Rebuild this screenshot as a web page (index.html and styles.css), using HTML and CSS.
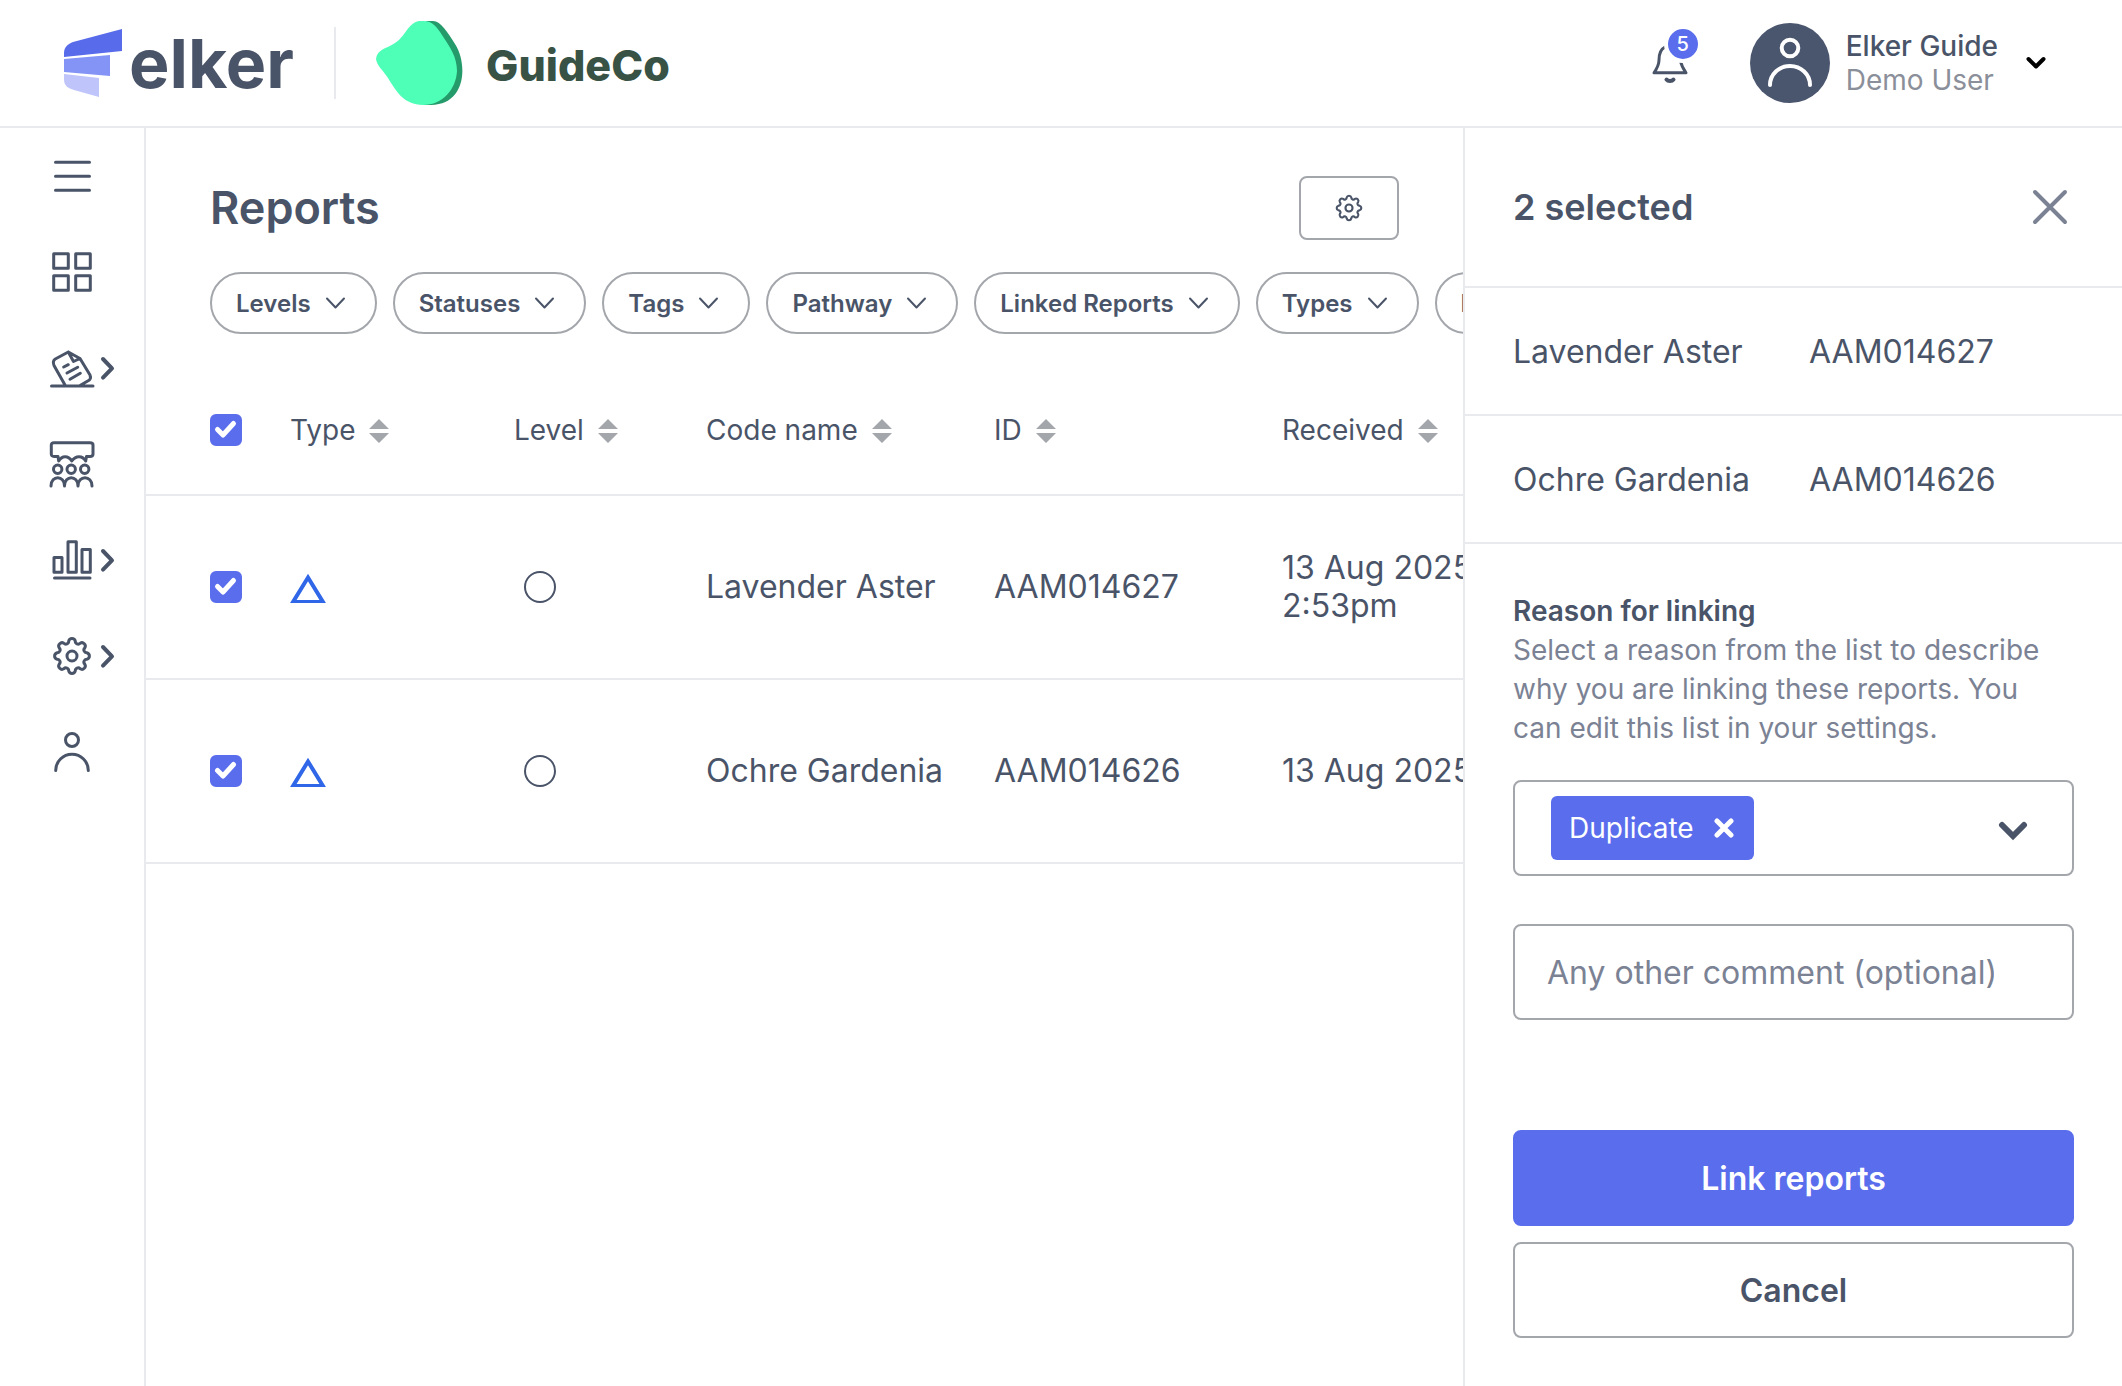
FILE: index.html
```
<!DOCTYPE html>
<html lang="en">
<head>
    <meta charset="UTF-8">
    <meta name="viewport" content="width=device-width, initial-scale=1.0">
    <title>Reports - Elker</title>
    <link rel="stylesheet" href="styles.css">
</head>
<body>
    <!-- Shared icons -->
    <svg class="sprite" aria-hidden="true">
        <symbol id="icon-gear" viewBox="0 0 48 48">
            <path d="M38.84 20.71A3.4 3.4 0 0 1 38.84 27.29A2.8 2.8 0 0 0 36.82 32.17A3.4 3.4 0 0 1 32.17 36.82A2.8 2.8 0 0 0 27.29 38.84A3.4 3.4 0 0 1 20.71 38.84A2.8 2.8 0 0 0 15.83 36.82A3.4 3.4 0 0 1 11.18 32.17A2.8 2.8 0 0 0 9.16 27.29A3.4 3.4 0 0 1 9.16 20.71A2.8 2.8 0 0 0 11.18 15.83A3.4 3.4 0 0 1 15.83 11.18A2.8 2.8 0 0 0 20.71 9.16A3.4 3.4 0 0 1 27.29 9.16A2.8 2.8 0 0 0 32.17 11.18A3.4 3.4 0 0 1 36.82 15.83A2.8 2.8 0 0 0 38.84 20.71Z"/>
            <circle cx="24" cy="24" r="5"/>
        </symbol>
        <symbol id="icon-right" viewBox="0 0 16 48">
            <path d="M3 15L12 24.3L3 33.6"/>
        </symbol>
        <symbol id="icon-down" viewBox="0 0 28 28">
            <path d="M4 9.5L12.5 18.5L21 9.5"/>
        </symbol>
        <symbol id="icon-user" viewBox="0 0 48 48">
            <circle cx="24" cy="12" r="6.5"/>
            <path d="M7.7 42.5A16.3 16.3 0 0 1 40.3 42.5"/>
        </symbol>
        <symbol id="icon-check" viewBox="0 0 32 32">
            <path d="M7.5 15.5L13 21L23.5 9.5"/>
        </symbol>
        <symbol id="icon-sort" viewBox="0 0 20 26">
            <path d="M10 1L20 11H0ZM0 15H20L10 25Z"/>
        </symbol>
    </svg>

    <header class="topbar">
        <a href="#" class="brand" aria-label="Elker home">
            <svg class="brand-mark" viewBox="0 0 58 68" width="58" height="68">
                <path fill="#586bea" d="M58 0V22L0 28V24C0 18 4 15 9 13Z"/>
                <path fill="#8494f6" d="M0 30L46 26V47L0 43Z"/>
                <path fill="#bfc5fa" d="M0 45L35 49V68L10 61C4 59 0 57 0 50Z"/>
            </svg>
            <span class="brand-name">elker</span>
        </a>
        <div class="client">
            <svg viewBox="0 0 88 84" width="88" height="84">
                <path fill="#259a6a" d="M50 0H57C65 0 72 12 79 23C92 43 90 84 55 84H48Z"/>
                <path fill="#4effb7" d="M43 0H48C56 0 61 6 66 14C74 26 81 36 81 50C80 68 67 84 47 84C28 84 20 70 12 57C7 49 1 45 0 38C1 28 10 28 19 22C29 16 32 2 43 0Z"/>
            </svg>
            <span class="client-name">GuideCo</span>
        </div>

        <div class="account">
            <button class="bell" aria-label="Notifications">
                <svg viewBox="0 0 48 48" width="48" height="48">
                    <path d="M19 8C14 10.5 13 15 13 21C13 26 11 29.5 8 33.8H40C37 29.500 35.500 27 34.500 22"/>
                    <path d="M20.500 40.500C22 42.500 26 42.500 27.500 40.500" stroke-width="4"/>
                </svg>
                <span class="badge">5</span>
            </button>
            <button class="profile">
                <span class="avatar">
                    <svg viewBox="0 0 80 80" width="80" height="80">
                        <circle cx="40" cy="25" r="8.3"/>
                        <path d="M20 62A20 19 0 0 1 60 62"/>
                    </svg>
                </span>
                <span class="profile-text">
                    <span class="profile-name">Elker Guide</span>
                    <span class="profile-role">Demo User</span>
                </span>
                <svg class="profile-arrow" viewBox="0 0 20 14" width="20" height="14">
                    <path d="M2.5 3L10 10.5L17.5 3"/>
                </svg>
            </button>
        </div>
    </header>

    <div class="layout">
        <nav class="sidebar" aria-label="Main">
            <button class="nav-item" aria-label="Toggle menu">
                <svg class="nav-icon" viewBox="0 0 48 48"><path d="M7.5 10.3H41.5M7.5 24.3H41.5M7.5 38.3H41.5"/></svg>
            </button>
            <a href="#" class="nav-item" aria-label="Dashboard">
                <svg class="nav-icon" viewBox="0 0 48 48"><path d="M5.7 5.7H20.3V20.3H5.7ZM27.7 5.7H42.3V20.3H27.7ZM5.7 27.7H20.3V42.3H5.7ZM27.7 27.7H42.3V42.3H27.7Z"/></svg>
            </a>
            <a href="#" class="nav-item" aria-label="Reports">
                <svg class="nav-icon" viewBox="0 0 48 48">
                    <path d="M3.5 42H45M17 41L6 21.5C5 19 5 16.5 7.3 15L20.3 8L32 14.5L42 31C43 33.5 42.5 35 41 36.3L32 41.5M20.3 8L25.5 17.5L32 14.5"/>
                    <path d="M15.7 23L20.3 20.7M19 29L29.7 23.3M22 35.3L32.3 29.3"/>
                </svg>
                <svg class="nav-arrow"><use href="#icon-right"/></svg>
            </a>
            <a href="#" class="nav-item" aria-label="Town hall">
                <svg class="nav-icon" viewBox="0 0 48 48">
                    <path d="M10 16.5H6C4 16.5 3.3 15.5 3.3 14V5C3.3 3.5 4 2.8 6 2.8H42C44 2.8 45 3.5 45 5V14C45 15.5 44 16.5 42 16.5H38.5L37.7 21C34.5 15.5 28 15 23.8 21C20 15 14 15.5 10.7 21Z"/>
                    <circle cx="9.7" cy="29.3" r="4.2"/><circle cx="23.2" cy="29.3" r="4.2"/><circle cx="36.7" cy="29.3" r="4.2"/>
                    <path d="M3 46C3 35 16.5 35 16.5 46C16.5 35 30 35 30 46C30 35 44 35 44 46"/>
                </svg>
            </a>
            <a href="#" class="nav-item" aria-label="Analytics">
                <svg class="nav-icon" viewBox="0 0 48 48"><path d="M6 21.5H14V36.3H6ZM20 5.7H28.3V36.3H20ZM34 13.5H42.3V36.3H34ZM6.5 42H42"/></svg>
                <svg class="nav-arrow"><use href="#icon-right"/></svg>
            </a>
            <a href="#" class="nav-item" aria-label="Settings">
                <svg class="nav-icon"><use href="#icon-gear"/></svg>
                <svg class="nav-arrow"><use href="#icon-right"/></svg>
            </a>
            <a href="#" class="nav-item" aria-label="Profile">
                <svg class="nav-icon"><use href="#icon-user"/></svg>
            </a>
        </nav>

        <main class="content">
            <div class="content-head">
                <h1>Reports</h1>
                <button class="btn-settings" aria-label="Table settings">
                    <svg><use href="#icon-gear"/></svg>
                </button>
            </div>

            <div class="filters">
                <button class="filter">Levels <svg><use href="#icon-down"/></svg></button>
                <button class="filter">Statuses <svg><use href="#icon-down"/></svg></button>
                <button class="filter">Tags <svg><use href="#icon-down"/></svg></button>
                <button class="filter">Pathway <svg><use href="#icon-down"/></svg></button>
                <button class="filter">Linked Reports <svg><use href="#icon-down"/></svg></button>
                <button class="filter">Types <svg><use href="#icon-down"/></svg></button>
                <button class="filter">Received <svg><use href="#icon-down"/></svg></button>
            </div>

            <table class="reports">
                <colgroup>
                    <col class="col-check">
                    <col class="col-type">
                    <col class="col-level">
                    <col class="col-name">
                    <col class="col-id">
                    <col class="col-date">
                </colgroup>
                <thead>
                    <tr>
                        <th><label class="check"><input type="checkbox" checked aria-label="Select all"><svg><use href="#icon-check"/></svg></label></th>
                        <th>Type <svg class="sort"><use href="#icon-sort"/></svg></th>
                        <th>Level <svg class="sort"><use href="#icon-sort"/></svg></th>
                        <th>Code name <svg class="sort"><use href="#icon-sort"/></svg></th>
                        <th>ID <svg class="sort"><use href="#icon-sort"/></svg></th>
                        <th>Received <svg class="sort"><use href="#icon-sort"/></svg></th>
                    </tr>
                </thead>
                <tbody>
                    <tr>
                        <td><label class="check"><input type="checkbox" checked aria-label="Select Lavender Aster"><svg><use href="#icon-check"/></svg></label></td>
                        <td><svg class="type" viewBox="0 0 36 32"><path d="M18 6.5L33 31H3Z"/></svg></td>
                        <td><span class="level"></span></td>
                        <td>Lavender Aster</td>
                        <td>AAM014627</td>
                        <td>13 Aug 2025<br>2:53pm</td>
                    </tr>
                    <tr>
                        <td><label class="check"><input type="checkbox" checked aria-label="Select Ochre Gardenia"><svg><use href="#icon-check"/></svg></label></td>
                        <td><svg class="type" viewBox="0 0 36 32"><path d="M18 6.5L33 31H3Z"/></svg></td>
                        <td><span class="level"></span></td>
                        <td>Ochre Gardenia</td>
                        <td>AAM014626</td>
                        <td>13 Aug 2025</td>
                    </tr>
                </tbody>
            </table>
        </main>

        <aside class="panel">
            <div class="panel-head">
                <h2>2 selected</h2>
                <button class="btn-close" aria-label="Close">
                    <svg viewBox="0 0 48 48"><path d="M9 9L39 39M39 9L9 39"/></svg>
                </button>
            </div>
            <table class="selected">
                <tr>
                    <td>Lavender Aster</td>
                    <td>AAM014627</td>
                </tr>
                <tr>
                    <td>Ochre Gardenia</td>
                    <td>AAM014626</td>
                </tr>
            </table>

            <form class="link-form">
                <label class="form-label" for="reason">Reason for linking</label>
                <p class="hint">Select a reason from the list to describe why you are linking these reports. You can edit this list in your settings.</p>
                <div class="multi">
                    <span class="tag">Duplicate
                        <button type="button" aria-label="Remove Duplicate">
                            <svg viewBox="0 0 20 20"><path d="M3 3L17 17M17 3L3 17"/></svg>
                        </button>
                    </span>
                    <select id="reason">
                        <option value=""></option>
                        <option value="duplicate">Duplicate</option>
                    </select>
                    <svg class="multi-arrow" viewBox="0 0 30 28"><path d="M4 11L15 22L26 11"/></svg>
                </div>
                <input class="comment" type="text" placeholder="Any other comment (optional)" aria-label="Any other comment (optional)">
                <div class="form-actions">
                    <button type="submit" class="btn btn-primary">Link reports</button>
                    <button type="button" class="btn">Cancel</button>
                </div>
            </form>
        </aside>
    </div>
</body>
</html>
```
FILE: styles.css
```
* {
    box-sizing: border-box;
}
body {
    margin: 0;
    min-height: 100vh;
    display: flex;
    flex-direction: column;
    font-family: Inter, "Liberation Sans", sans-serif;
    font-size: 32px;
    color: #4a5468;
    background-color: #fff;
}
h1, h2, p {
    margin: 0;
}
button {
    font: inherit;
    color: inherit;
    background: none;
    border: 0;
    padding: 0;
    cursor: pointer;
}
svg {
    fill: none;
    stroke: currentColor;
    stroke-width: 3;
    stroke-linecap: round;
    stroke-linejoin: round;
    flex-shrink: 0;
}
.sprite {
    position: absolute;
    width: 0;
    height: 0;
}

/* Top bar */
.topbar {
    height: 128px;
    padding: 0 76px 0 64px;
    display: flex;
    align-items: center;
    border-bottom: 2px solid #e8eaed;
}
.brand {
    height: 72px;
    padding-right: 40px;
    margin-right: 40px;
    display: flex;
    align-items: center;
    gap: 7px;
    border-right: 2px solid #e8eaed;
    color: inherit;
    text-decoration: none;
}
.brand-mark, .client svg {
    stroke: none;
}
.brand-name {
    font-size: 68px;
    font-weight: 700;
    line-height: 72px;
}
.client {
    display: flex;
    align-items: center;
    gap: 22px;
}
.client-name {
    padding-top: 4px;
    font-size: 43px;
    font-weight: 800;
    color: #385245;
}
.account {
    margin-left: auto;
    display: flex;
    align-items: center;
    gap: 56px;
}
.bell {
    position: relative;
    height: 48px;
}
.badge {
    position: absolute;
    top: -14px;
    right: -8px;
    width: 38px;
    height: 38px;
    border: 4px solid #fff;
    border-radius: 50%;
    background-color: #5a6dec;
    color: #fff;
    font-size: 20px;
    font-weight: 500;
    line-height: 30px;
}
.profile {
    display: flex;
    align-items: center;
    text-align: left;
}
.avatar {
    width: 80px;
    height: 80px;
    border-radius: 50%;
    background-color: #4a556e;
    color: #fff;
}
.avatar svg {
    stroke-width: 4;
}
.profile-text {
    display: flex;
    flex-direction: column;
    margin: 0 28px 0 16px;
    font-size: 28px;
    line-height: 34px;
}
.profile-name {
    font-weight: 500;
}
.profile-role {
    color: #8b8f9a;
}
.profile-arrow {
    color: #000;
    stroke-width: 4;
}

/* Page layout */
.layout {
    flex: 1;
    display: flex;
}
.sidebar {
    width: 146px;
    flex-shrink: 0;
    border-right: 2px solid #e8eaed;
}
.nav-item {
    width: 100%;
    height: 96px;
    padding-left: 48px;
    display: flex;
    align-items: center;
    gap: 4px;
    color: inherit;
}
.nav-icon {
    width: 48px;
    height: 48px;
}
.nav-arrow {
    width: 16px;
    height: 48px;
    stroke-width: 4;
}
.content {
    flex: 1;
    min-width: 0;
    overflow: hidden;
}
.content-head {
    padding: 48px 64px 32px;
    display: flex;
    align-items: center;
    justify-content: space-between;
}
h1 {
    font-size: 45px;
    font-weight: 600;
    line-height: 64px;
}
.btn-settings {
    width: 100px;
    height: 64px;
    display: flex;
    align-items: center;
    justify-content: center;
    border: 2px solid #a3a6ab;
    border-radius: 8px;
}
.btn-settings svg {
    width: 34px;
    height: 34px;
}

/* Filters */
.filters {
    padding-left: 64px;
    margin-bottom: 32px;
    display: flex;
    gap: 16px;
}
.filter {
    height: 62px;
    padding: 0 24px;
    display: flex;
    align-items: center;
    gap: 12px;
    flex-shrink: 0;
    border: 2px solid #a3a6ab;
    border-radius: 31px;
    font-size: 24px;
    font-weight: 600;
    white-space: nowrap;
}
.filter svg {
    width: 28px;
    height: 28px;
    stroke-width: 2;
}

/* Reports table */
.reports {
    width: 100%;
    table-layout: fixed;
    border-collapse: separate;
    border-spacing: 0;
    line-height: 38px;
    white-space: nowrap;
}
.col-check { width: 144px; }
.col-type { width: 224px; }
.col-level { width: 192px; }
.col-name { width: 288px; }
.col-id { width: 288px; }
.reports th, .reports td {
    padding: 0;
    border-bottom: 2px solid #e8eaed;
    text-align: left;
    vertical-align: middle;
}
.reports th {
    height: 130px;
    font-size: 28px;
    font-weight: 400;
}
.reports td {
    height: 184px;
}
.reports th:first-child, .reports td:first-child {
    padding-left: 64px;
}
.check {
    display: grid;
    width: 32px;
    height: 32px;
}
.check input, .check svg {
    grid-area: 1 / 1;
    width: 32px;
    height: 32px;
    margin: 0;
}
.check input {
    appearance: none;
    border: 2px solid #a3a6ab;
    border-radius: 6px;
}
.check input:checked {
    border-color: #5a6dec;
    background-color: #5a6dec;
}
.check svg {
    color: #fff;
    stroke-width: 5;
    pointer-events: none;
}
.sort {
    width: 20px;
    height: 26px;
    margin-left: 6px;
    vertical-align: -4px;
    fill: #a3a6ab;
    stroke: none;
}
.type {
    display: block;
    width: 36px;
    height: 32px;
    color: #2f67e8;
    stroke-width: 4;
    stroke-linejoin: miter;
}
.level {
    display: block;
    width: 32px;
    height: 32px;
    margin-left: 10px;
    border: 2px solid #4a5468;
    border-radius: 50%;
}

/* Link reports panel */
.panel {
    width: 659px;
    flex-shrink: 0;
    border-left: 2px solid #e8eaed;
}
.panel-head {
    height: 160px;
    padding: 0 48px;
    display: flex;
    align-items: center;
    justify-content: space-between;
    border-bottom: 2px solid #e8eaed;
}
h2 {
    font-size: 36px;
    font-weight: 600;
}
.btn-close {
    width: 48px;
    height: 48px;
    color: #7b8294;
}
.btn-close svg {
    display: block;
    stroke-width: 4;
}
.selected {
    width: 100%;
    table-layout: fixed;
    border-spacing: 0;
}
.selected td {
    height: 128px;
    padding: 0;
    border-bottom: 2px solid #e8eaed;
}
.selected td:first-child {
    width: 344px;
    padding-left: 48px;
}
.link-form {
    padding: 48px;
    display: flex;
    flex-direction: column;
}
.form-label, .hint {
    font-size: 28px;
    line-height: 39px;
}
.form-label {
    font-weight: 600;
}
.hint {
    margin-bottom: 32px;
    color: #7b8294;
}
.multi {
    height: 96px;
    margin-bottom: 48px;
    padding: 0 44px 0 36px;
    display: flex;
    align-items: center;
    border: 2px solid #a3a6ab;
    border-radius: 8px;
}
.tag {
    height: 64px;
    padding: 0 20px 0 18px;
    display: flex;
    align-items: center;
    gap: 20px;
    border-radius: 6px;
    background-color: #5a6dec;
    color: #fff;
    font-size: 28px;
}
.tag button {
    display: flex;
}
.tag svg {
    width: 20px;
    height: 20px;
    stroke-width: 5;
}
.multi select {
    flex: 1;
    height: 64px;
    appearance: none;
    border: 0;
    background: none;
    font: inherit;
    color: inherit;
}
.multi-arrow {
    width: 30px;
    height: 28px;
    stroke-width: 6;
    stroke-linejoin: miter;
    pointer-events: none;
}
.comment {
    height: 96px;
    padding: 0 78px 0 32px;
    border: 2px solid #a3a6ab;
    border-radius: 8px;
    font: inherit;
    color: inherit;
}
.comment::placeholder {
    color: #7b8294;
}
.form-actions {
    margin-top: 110px;
    display: flex;
    flex-direction: column;
    gap: 16px;
}
.btn {
    height: 96px;
    border: 2px solid #a3a6ab;
    border-radius: 8px;
    font-weight: 600;
}
.btn-primary {
    border-color: #5a6dec;
    background-color: #5a6dec;
    color: #fff;
}
```
